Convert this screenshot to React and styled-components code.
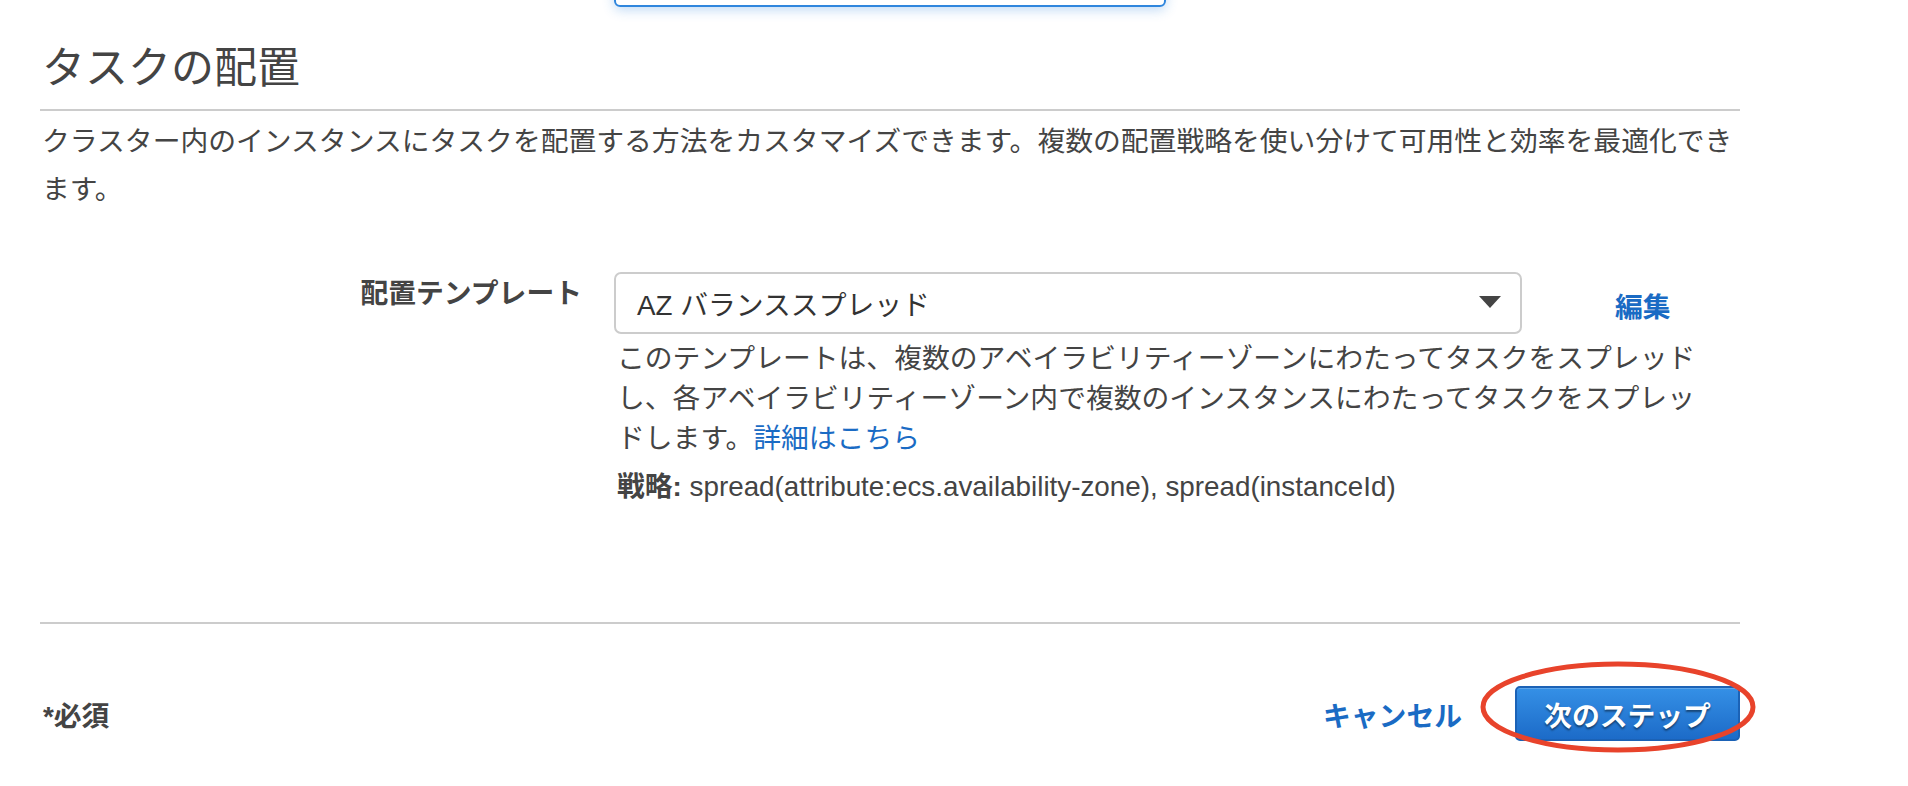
import styled, { createGlobalStyle } from 'styled-components';

const GlobalStyle = createGlobalStyle`
    * {
        box-sizing: border-box;
    }
    body {
        margin: 0;
        background: #FFFFFF;
        color: #444444;
        font-family: "Liberation Sans", "Noto Sans CJK JP", sans-serif;
    }
`;

export default function App() {
    return (
        <Page>
            <GlobalStyle />
            <FocusedInput />
            <Heading>タスクの配置</Heading>
            <Intro>
                クラスター内のインスタンスにタスクを配置する方法をカスタマイズできます。複数の配置戦略を使い分けて可用性と効率を最適化できます。
            </Intro>
            <FormRow>
                <Label>配置テンプレート</Label>
                <Field>
                    <SelectRow>
                        <Select>
                            <span>AZ バランススプレッド</span>
                            <Caret />
                        </Select>
                        <EditLink href="#">編集</EditLink>
                    </SelectRow>
                    <Help>
                        このテンプレートは、複数のアベイラビリティーゾーンにわたってタスクをスプレッド<br />
                        し、各アベイラビリティーゾーン内で複数のインスタンスにわたってタスクをスプレッ<br />
                        ドします。<Link href="#">詳細はこちら</Link>
                    </Help>
                    <Strategy>
                        <b>戦略:</b> spread(attribute:ecs.availability-zone), spread(instanceId)
                    </Strategy>
                </Field>
            </FormRow>
            <Footer>
                <Required>*必須</Required>
                <Actions>
                    <Link bold href="#">キャンセル</Link>
                    <ButtonWrap>
                        <NextButton>次のステップ</NextButton>
                        <Circle viewBox="0 0 276 92">
                            <ellipse cx="138" cy="46" rx="135" ry="43" fill="none" stroke="#E8432B" strokeWidth="5" />
                        </Circle>
                    </ButtonWrap>
                </Actions>
            </Footer>
        </Page>
    );
}

const Page = styled.div`
    width: 1740px;
    padding-left: 40px;
    padding-bottom: 40px;
`;

const FocusedInput = styled.div`
    width: 552px;
    height: 50px;
    margin-top: -43px;
    margin-left: 574px;
    border: 2px solid #2F86DD;
    border-radius: 6px;
    box-shadow: 0 3px 12px rgba(47, 134, 221, 0.3);
`;

const Heading = styled.h2`
    margin: 34px 0 0;
    padding: 0 0 13px 2px;
    border-bottom: 2px solid #CCCCCC;
    font-size: 43px;
    line-height: 55px;
    font-weight: 400;
    color: #444444;
`;

const Intro = styled.p`
    margin: 7px 0 0;
    padding-left: 2px;
    font-size: 27.8px;
    line-height: 48px;
`;

const FormRow = styled.div`
    display: grid;
    grid-template-columns: 542px 1fr;
    column-gap: 32px;
    margin-top: 58px;
`;

const Label = styled.div`
    text-align: right;
    font-size: 27.8px;
    line-height: 44px;
    font-weight: 700;
`;

const Field = styled.div`
    display: flex;
    flex-direction: column;
`;

const SelectRow = styled.div`
    display: flex;
    align-items: center;
    gap: 93px;
    font-size: 27.8px;
`;

const Select = styled.div`
    width: 908px;
    height: 62px;
    display: flex;
    align-items: center;
    justify-content: space-between;
    padding: 0 19px 0 21px;
    border: 2px solid #CCCCCC;
    border-radius: 7px;
    color: #333333;
`;

const Caret = styled.span`
    width: 0;
    height: 0;
    margin-top: -2px;
    border-left: 11px solid transparent;
    border-right: 11px solid transparent;
    border-top: 12px solid #444444;
`;

const Link = styled.a`
    color: #1A6BC4;
    text-decoration: none;
    font-weight: ${(props) => (props.bold ? 700 : 400)};
`;

const EditLink = styled(Link)`
    font-weight: 700;
    margin-top: 4px;
`;

const Help = styled.p`
    width: 1130px;
    margin: 5px 0 0;
    padding-left: 3px;
    font-size: 27.8px;
    line-height: 40px;
`;

const Strategy = styled.p`
    margin: 8px 0 0;
    padding-left: 3px;
    font-size: 27.8px;
    line-height: 40px;
    b {
        font-weight: 700;
    }
`;

const Footer = styled.div`
    display: flex;
    justify-content: space-between;
    align-items: center;
    margin-top: 115px;
    padding-top: 62px;
    border-top: 2px solid #CCCCCC;
    font-size: 27.8px;
`;

const Required = styled.div`
    padding-left: 3px;
    font-weight: 700;
`;

const Actions = styled.div`
    display: flex;
    align-items: center;
    gap: 53px;
`;

const ButtonWrap = styled.div`
    position: relative;
`;

const NextButton = styled.button`
    display: block;
    width: 225px;
    height: 55px;
    border: 2px solid #1B62B6;
    border-radius: 5px;
    background: linear-gradient(#3590E6, #1C6BC8);
    color: #FFFFFF;
    font-family: inherit;
    font-size: 27.8px;
    font-weight: 700;
    text-shadow: 0 2px 2px rgba(0, 0, 0, 0.45);
    box-shadow: inset 0 1px 0 rgba(255, 255, 255, 0.2);
`;

const Circle = styled.svg`
    position: absolute;
    left: -35px;
    top: -25px;
    width: 276px;
    height: 92px;
    pointer-events: none;
`;
